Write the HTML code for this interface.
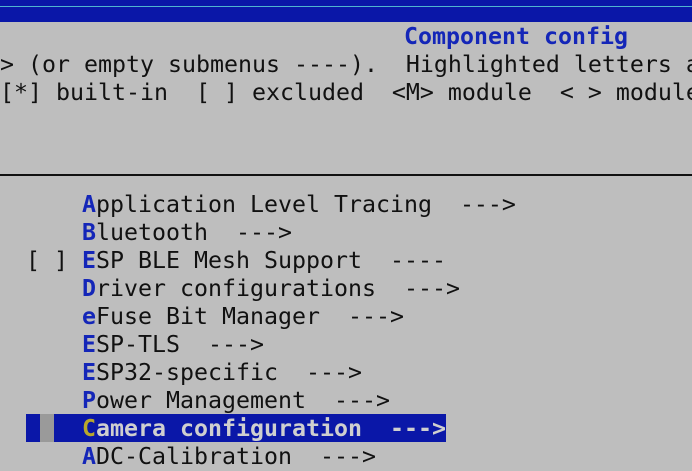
<!DOCTYPE html>
<html><head><style>
html,body{margin:0;padding:0;}
body{width:692px;height:464px;overflow:hidden;background:#bebebe;position:relative;
font-family:"DejaVu Sans Mono","Liberation Mono",monospace;font-size:23.25px;color:#111;}
.top{position:absolute;left:0;top:0;width:692px;height:22px;background:#0a17a8;}
.cy{position:absolute;left:0;top:6px;width:692px;height:1px;background:#4fb6d0;}
.l{position:absolute;white-space:pre;line-height:28px;height:28px;margin-top:1px;}
.k{color:#1426b8;font-weight:bold;}
.t{color:#1426b8;font-weight:bold;}
.sep{position:absolute;left:0;top:174px;width:692px;height:2px;background:#111;}
.hl{position:absolute;left:26px;top:414px;width:420px;height:28px;background:#0a17a8;}
.gb{position:absolute;left:40px;top:414px;width:14px;height:28px;background:#9a9a9a;}
.hlt{color:#cfcfcf;font-weight:bold;}
.hk{color:#b9a72c;font-weight:bold;}
</style></head><body>
<div class="top"></div><div class="cy"></div>
<div class="l t" style="left:404px;top:22px">Component config</div>
<div class="l" style="left:0;top:50px">&gt; (or empty submenus ----).  Highlighted letters a</div>
<div class="l" style="left:0;top:78px">[*] built-in  [ ] excluded  &lt;M&gt; module  &lt; &gt; module</div>
<div class="sep"></div>
<div class="l" style="left:82px;top:190px"><span class="k">A</span>pplication Level Tracing  ---&gt;</div>
<div class="l" style="left:82px;top:218px"><span class="k">B</span>luetooth  ---&gt;</div>
<div class="l" style="left:26px;top:246px">[ ] <span class="k">E</span>SP BLE Mesh Support  ----</div>
<div class="l" style="left:82px;top:274px"><span class="k">D</span>river configurations  ---&gt;</div>
<div class="l" style="left:82px;top:302px"><span class="k">e</span>Fuse Bit Manager  ---&gt;</div>
<div class="l" style="left:82px;top:330px"><span class="k">E</span>SP-TLS  ---&gt;</div>
<div class="l" style="left:82px;top:358px"><span class="k">E</span>SP32-specific  ---&gt;</div>
<div class="l" style="left:82px;top:386px"><span class="k">P</span>ower Management  ---&gt;</div>
<div class="hl"></div><div class="gb"></div>
<div class="l hlt" style="left:82px;top:414px"><span class="hk">C</span>amera configuration  ---&gt;</div>
<div class="l" style="left:82px;top:442px"><span class="k">A</span>DC-Calibration  ---&gt;</div>
</body></html>
